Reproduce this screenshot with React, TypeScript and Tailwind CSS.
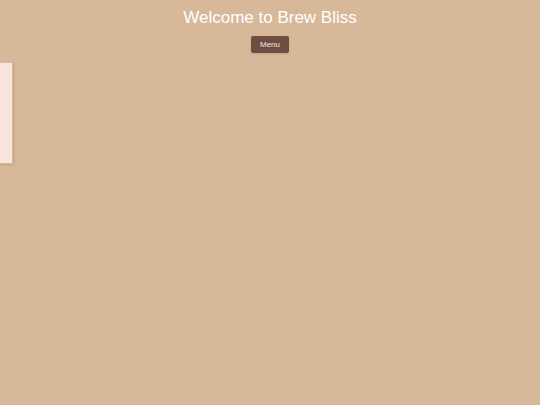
import React from 'react';

export default function App() {
  return (
    <div
      className="relative min-h-[405px] w-full overflow-hidden bg-[#d7b99a]"
      style={{ fontFamily: '"Liberation Sans", Arial, sans-serif' }}
    >
      {/* Header */}
      <div className="flex flex-col items-center pt-[8px]">
        <h1 className="text-[17px] leading-[20px] text-white">Welcome to Brew Bliss</h1>
        <button className="mt-[8px] h-[17px] rounded-[2px] bg-[#6f4e42] px-[9px] text-[8px] leading-[17px] text-[#f3e6dc] shadow-sm">
          Menu
        </button>
      </div>

      {/* Off-canvas menu drawer */}
      <aside className="absolute left-[-187px] top-[62px] h-[102px] w-[200px] border border-[#dcb6a4] bg-[#f7e5dc] shadow-[1px_1px_2px_rgba(0,0,0,0.12)]" />
    </div>
  );
}
